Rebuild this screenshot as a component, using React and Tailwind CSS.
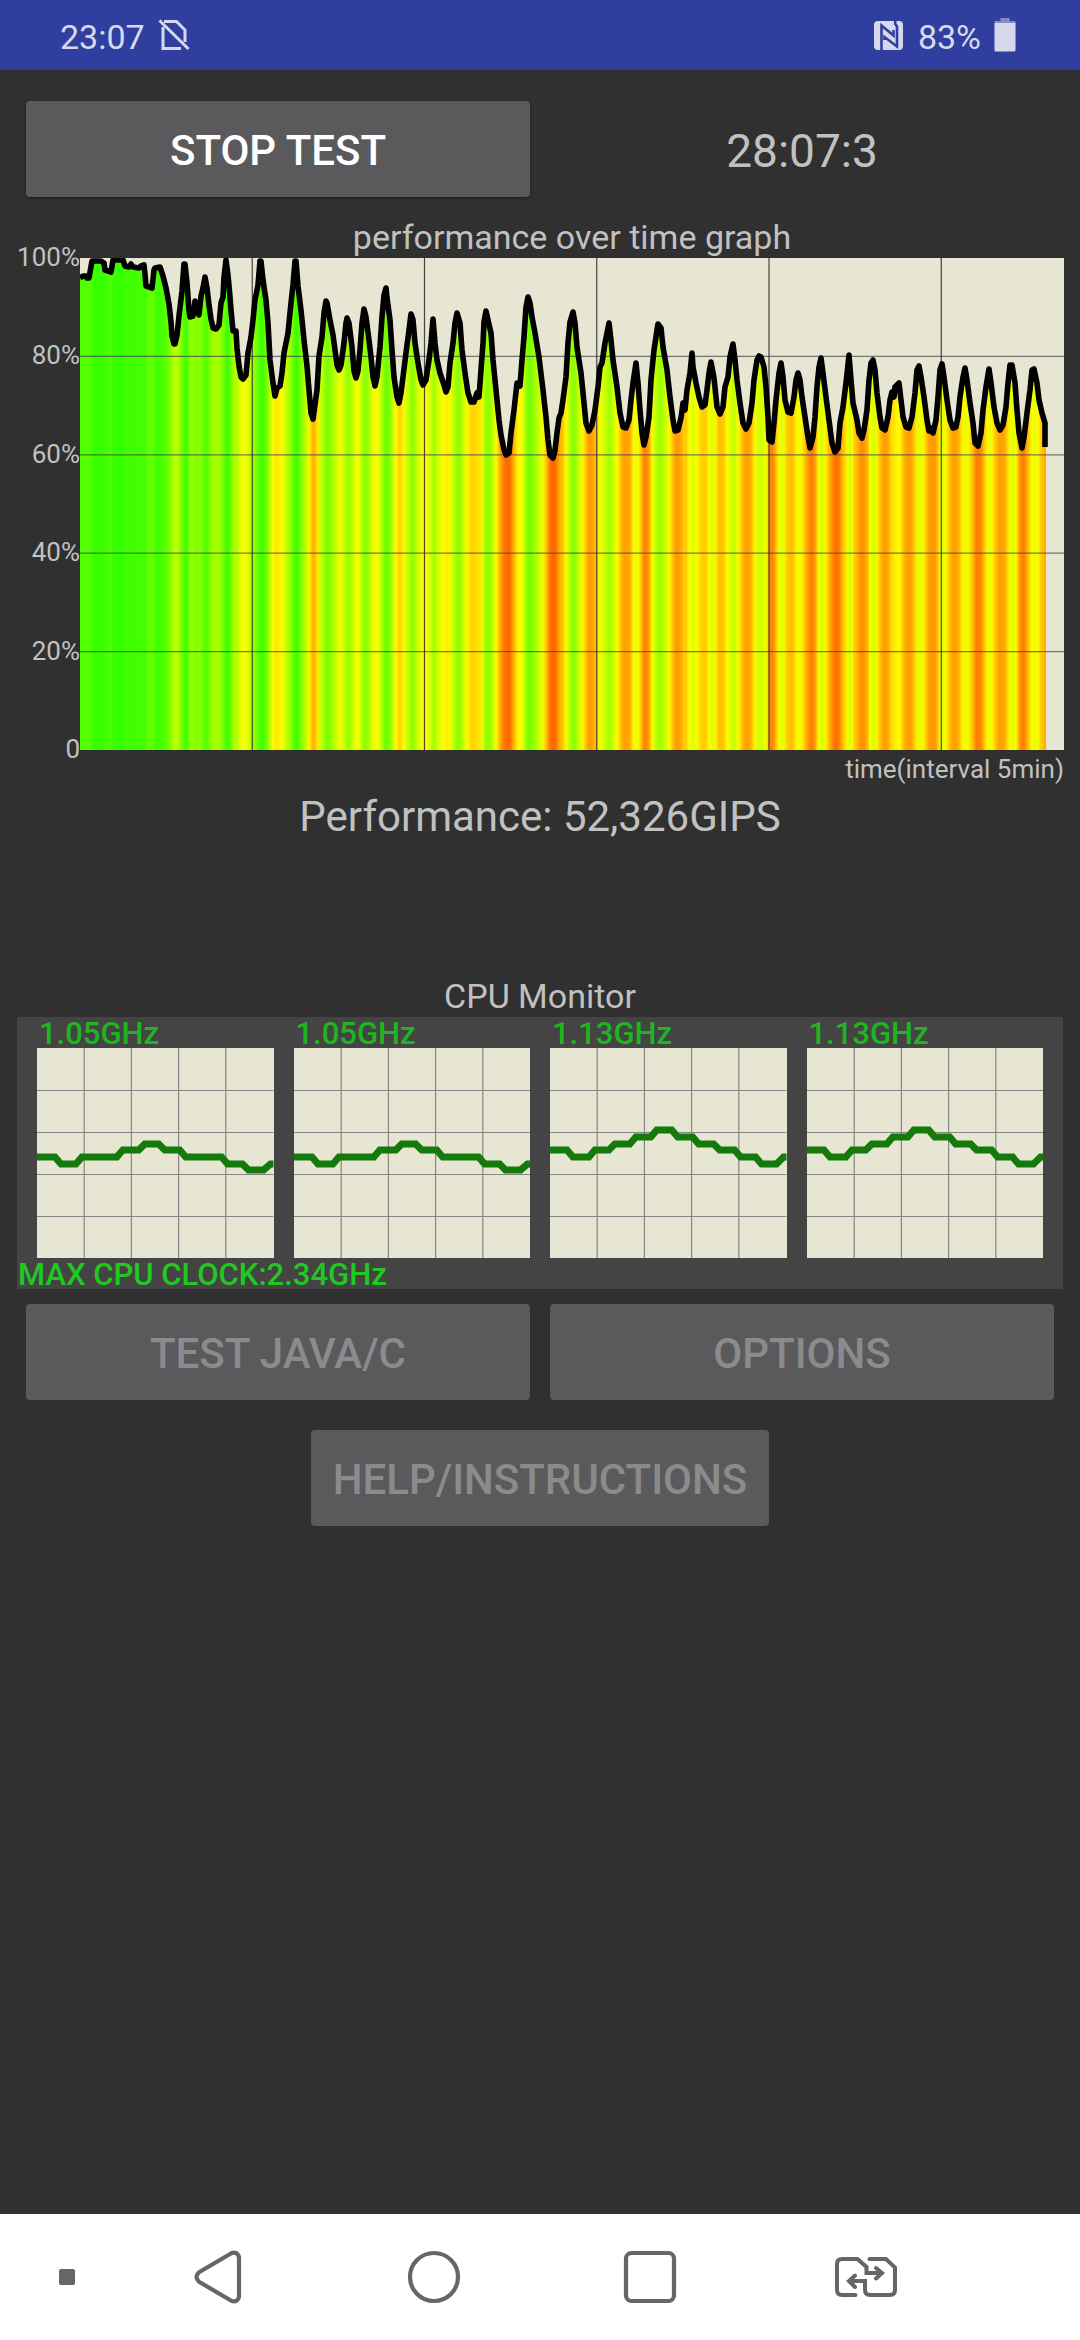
import React from 'react';

const CHART_W = 984;
const CHART_H = 492;

// performance trace, x/y in chart units (y = 0 is 100%)
const TRACE = `0,20 3,18 6,18 7,20 9,20 12,3 21,3 24,5 25,12 31,14 33,2 43,2 45,8 49,9 51,6 53,9 59,10 61,8 64,7
65,16 66,28 72,30 74,12 75,10 80,9 83,18 86,30 89,46 91,64 92,78 94,86 95,86 97,77 99,58 102,33 104,6 105,6
107,25 109,52 110,59 113,58 114,52 115,43 117,50 119,57 121,38 123,30 125,19 127,30 129,47 131,61 133,70
136,71 139,67 141,45 143,39 144,19 146,2 148,17 150,39 151,52 153,73 156,73 157,90 159,108 161,119 163,121
166,117 168,95 171,79 173,62 175,42 178,27 180,3 181,3 183,22 186,42 188,65 190,102 193,125 195,138 197,130
200,128 202,115 204,95 208,75 211,45 213,27 215,3 216,3 218,28 221,52 224,82 227,108 229,132 231,155 233,161
234,154 237,132 239,98 242,79 244,55 246,43 247,45 250,62 253,77 255,92 257,107 259,112 261,107 264,85
266,65 267,60 269,65 272,89 274,113 276,120 278,113 280,92 282,65 284,51 286,59 289,82 291,99 293,119
295,128 297,119 300,89 302,59 304,37 306,30 307,40 310,62 312,92 314,119 317,139 319,145 321,135 323,119
326,95 329,72 331,56 333,62 335,85 338,105 341,122 343,127 346,122 349,102 351,85 353,61 355,85 357,102
360,115 363,124 366,134 368,129 370,105 373,85 375,65 377,55 380,65 382,92 385,115 388,135 391,144 394,144
397,135 399,139 401,112 403,85 404,64 406,53 408,62 411,75 413,102 416,132 419,162 421,177 424,192 426,197
429,195 431,175 434,152 437,125 440,128 442,102 444,79 446,49 448,39 450,45 452,59 455,75 459,99 463,132
466,159 468,182 470,197 473,200 475,192 477,175 479,160 481,155 483,142 486,119 488,85 490,64 493,54 495,65
497,89 501,115 504,145 506,165 509,173 512,167 515,152 518,129 520,109 522,105 525,85 527,75 529,65 531,82
533,102 537,129 540,155 543,169 546,170 549,162 551,142 553,125 556,105 558,125 560,152 562,175 564,187
566,179 569,159 571,122 574,92 577,72 578,66 581,70 583,89 587,112 590,139 593,162 595,173 598,172 601,160
603,145 605,152 607,132 610,115 612,95 613,109 616,125 619,139 622,149 625,147 627,132 629,115 631,104
634,120 637,149 640,156 643,149 645,129 648,119 650,99 653,86 655,102 657,122 660,145 663,165 666,171
669,165 672,145 674,122 677,102 679,98 681,99 684,109 686,129 688,159 689,182 692,184 694,165 696,142
699,115 701,105 703,119 705,142 708,154 711,155 714,139 716,122 718,115 720,122 722,139 725,159 728,179
730,190 733,179 735,159 737,129 739,109 741,100 743,115 746,139 749,162 752,185 755,194 758,190 760,165
763,149 766,125 769,97 771,122 773,145 777,162 779,175 782,180 784,172 787,152 789,122 791,105 793,102
795,112 797,135 800,159 802,170 805,172 808,159 810,142 812,134 814,139 815,129 819,125 821,142 823,159
826,169 829,170 832,159 835,135 837,112 839,108 841,119 844,139 847,162 849,173 852,170 853,175 856,162
858,139 860,112 862,106 864,119 867,142 870,162 873,170 876,169 878,159 880,139 883,119 885,110 887,122
890,145 893,165 895,185 898,188 901,175 903,152 906,129 909,111 911,125 914,149 917,165 920,172 923,167
926,149 928,125 930,107 932,107 935,125 937,152 939,175 942,190 944,179 947,155 950,132 952,112 954,111
957,125 959,142 962,155 965,165 965,189`
  .split(/\s+/)
  .map((p) => p.split(',').map(Number));

const TRACE_END = 966;

const CORE_LOW = '0,109 18,109 24,116 39,116 45,109 80,109 86,102 102,102 108,96 122,96 128,102 143,102 149,109 185,109 191,116 206,116 212,122 227,122 234,116 237,116';
const CORE_HIGH = '0,102 17,102 23,109 39,109 45,102 59,102 65,96 80,96 86,89 101,89 107,82 122,82 128,89 143,89 149,96 164,96 170,102 185,102 191,109 206,109 212,116 227,116 234,109 237,109';

const CORES = [
  { clock: '1.05GHz', points: CORE_LOW },
  { clock: '1.05GHz', points: CORE_LOW },
  { clock: '1.13GHz', points: CORE_HIGH },
  { clock: '1.13GHz', points: CORE_HIGH },
];

function traceY(x) {
  const i = TRACE.findIndex((p) => p[0] >= x);
  if (i === 0) return TRACE[0][1];
  if (i < 0) return TRACE[TRACE.length - 1][1];
  const [x0, y0] = TRACE[i - 1];
  const [x1, y1] = TRACE[i];
  return y0 + ((y1 - y0) * (x - x0)) / (x1 - x0);
}

// green at 100%, yellow at 75%, orange and red below
function loadColor(y) {
  const pct = 100 - (y / CHART_H) * 100;
  if (pct >= 75) return `rgb(${Math.round(51 + (100 - pct) * 8)},255,0)`;
  return `rgb(255,${Math.max(0, Math.round(255 - (75 - pct) * 10))},0)`;
}

const STOPS = [];
for (let x = 0; x <= TRACE_END; x += 2) STOPS.push([x / TRACE_END, loadColor(traceY(x - 1))]);

const linePoints = TRACE.map((p) => p.join(',')).join(' ');

function PerformanceChart() {
  return (
    <svg viewBox={`0 0 ${CHART_W} ${CHART_H}`} preserveAspectRatio="none" className="block w-full h-full bg-[#e6e6d2]" role="img" aria-label="performance over time">
      <defs>
        <linearGradient id="load" gradientUnits="userSpaceOnUse" x1="0" y1="0" x2={TRACE_END} y2="0">
          {STOPS.map(([offset, color]) => <stop key={offset} offset={offset} stopColor={color} />)}
        </linearGradient>
      </defs>
      <polygon points={`0,${CHART_H} ${linePoints} ${TRACE_END},189 ${TRACE_END},${CHART_H}`} fill="url(#load)" />
      {[1, 2, 3, 4].map((i) => (
        <line key={i} x1="0" x2={CHART_W} y1={i * 98.4} y2={i * 98.4} stroke="#444" strokeOpacity="0.7" strokeWidth="1.2" />
      ))}
      {[1, 2, 3, 4, 5].map((i) => (
        <line key={i} x1={i * 172.25} x2={i * 172.25} y1="0" y2={CHART_H} stroke="#333" strokeOpacity="0.9" strokeWidth="1.2" />
      ))}
      <polyline points={linePoints} fill="none" stroke="#000" strokeWidth="5.6" strokeLinejoin="round" />
    </svg>
  );
}

function CoreGraph({ clock, points }) {
  return (
    <div className="flex-1 min-w-0">
      <p className="pt-[3px] pl-[2px] text-[31px] leading-7 font-medium text-[#1fb51f]">{clock}</p>
      <svg viewBox="0 0 237 210" preserveAspectRatio="none" className="block w-full h-[210px] bg-[#e6e6d2]">
        {[1, 2, 3, 4].map((i) => (
          <g key={i} stroke="#858585" strokeWidth="1.2">
            <line x1={i * 47.3} x2={i * 47.3} y1="0" y2="210" />
            <line x1="0" x2="237" y1={i * 42 + 0.5} y2={i * 42 + 0.5} />
          </g>
        ))}
        <polyline points={points} fill="none" stroke="#147a0c" strokeWidth="7" />
      </svg>
    </div>
  );
}

function AppButton({ className = '', children, ...props }) {
  return (
    <button
      className={`h-24 pt-[3px] rounded bg-[#5a5a5c] text-[42px] leading-none font-medium text-white shadow-[0_1px_3px_rgba(0,0,0,0.4)] disabled:text-[#8b8b8d] disabled:shadow-none ${className}`}
      {...props}
    >
      {children}
    </button>
  );
}

function StatusBar() {
  return (
    <header className="h-[70px] bg-[#303f9f] flex items-center justify-between pl-[60px] pr-[64px] text-[34px] leading-none text-[#d6d9ec]">
      <div className="flex items-center gap-[13px]">
        <span className="pt-[3px]">23:07</span>
        <svg width="32" height="32" viewBox="0 0 32 32" fill="none" stroke="currentColor" strokeWidth="3">
          <path d="M6 2.5H18.5L27 11V23" />
          <path d="M5 8V29.5H23" />
          <path d="M1.5 1.5L30.5 30" />
        </svg>
      </div>
      <div className="flex items-center">
        <svg width="29" height="29" viewBox="0 0 29 29">
          <rect width="29" height="29" rx="4" fill="currentColor" />
          <path d="M7.5 29V4.5L19.5 14.5V9" fill="none" stroke="#303f9f" strokeWidth="2.6" />
          <path d="M21.2 0V4M10.5 19V16L23 25.5V5.5L21.2 3" fill="none" stroke="#303f9f" strokeWidth="2.6" />
        </svg>
        <span className="ml-[15px] pt-[3px]">83%</span>
        <svg className="ml-[13px]" width="22" height="34" viewBox="0 0 22 34" fill="currentColor">
          <path d="M6.5 0H15.5V3H21.5V5H0.5V3H6.5Z" opacity="0.5" />
          <path d="M0.5 5H21.5V32Q21.5 33.5 20 33.5H2Q0.5 33.5 0.5 32Z" />
        </svg>
      </div>
    </header>
  );
}

function NavBar() {
  const cell = 'flex-1 h-full flex items-center justify-center';
  return (
    <nav className="h-[126px] bg-white flex items-center text-[#666]">
      <button aria-label="Hide navigation bar" className="w-[110px] h-full flex items-center pl-[59px]">
        <span className="w-4 h-4 rounded-xs bg-[#666]" />
      </button>
      <button aria-label="Back" className={cell}>
        <svg width="48" height="54" viewBox="0 0 48 54" fill="none" stroke="currentColor" strokeWidth="4.2" strokeLinejoin="round">
          <path d="M36.5 3.7L5 22.2Q0 27 5 31.8L36.5 50.3Q43 53.5 45 47V7Q43 0.5 36.5 3.7Z" />
        </svg>
      </button>
      <button aria-label="Home" className={cell}>
        <svg width="54" height="54" viewBox="0 0 54 54" fill="none" stroke="currentColor" strokeWidth="4.2">
          <circle cx="27" cy="27" r="24" />
        </svg>
      </button>
      <button aria-label="Recent apps" className={cell}>
        <svg width="54" height="54" viewBox="0 0 54 54" fill="none" stroke="currentColor" strokeWidth="4.2">
          <rect x="3" y="3" width="48" height="48" rx="5.5" />
        </svg>
      </button>
      <button aria-label="Switch SIM" className={cell}>
        <svg width="64" height="42" viewBox="0 0 64 42" fill="none" stroke="currentColor" strokeWidth="4" strokeLinecap="round">
          <path d="M21.5 39H8Q3 39 3 34V8Q3 3 8 3H23.5L32.5 11V17H46M42 12L48 17L42 22.5" />
          <path d="M35.5 3H52L61 11.5V34Q61 39 56 39H36Q31 39 31 34V25H17M21 19.5L15 25L21 31" />
        </svg>
      </button>
      <div className="w-[106px]" />
    </nav>
  );
}

export default function App() {
  return (
    <div className="min-h-screen flex flex-col bg-[#303030] text-[#c1c1c1] font-['Roboto',sans-serif]">
      <StatusBar />
      <main className="flex-1 pt-[31px]">
        <div className="grid grid-cols-2 gap-5 items-center px-[26px]">
          <AppButton>STOP TEST</AppButton>
          <p className="pt-[3px] text-center text-[46px] leading-none">28:07:3</p>
        </div>

        <section className="pr-4">
          <h2 className="mt-[19px] ml-20 text-center text-[34px] leading-[42px]">performance over time graph</h2>
          <div className="flex">
            <div className="w-20 -mt-[14px] -mb-[12px] flex flex-col justify-between text-right text-[26px] leading-[26px]">
              {['100%', '80%', '60%', '40%', '20%', '0'].map((label) => <span key={label}>{label}</span>)}
            </div>
            <div className="flex-1 min-w-0 h-[492px]">
              <PerformanceChart />
            </div>
          </div>
          <p className="mt-[5px] text-right text-[26px] leading-7">time(interval 5min)</p>
        </section>
        <p className="mt-[9px] text-center text-[42px] leading-[50px]">Performance: 52,326GIPS</p>

        <h2 className="mt-[133px] text-center text-[34px] leading-[42px]">CPU Monitor</h2>
        <section className="mx-[17px] bg-[#444]">
          <div className="flex gap-5 px-5">
            {CORES.map((core, i) => <CoreGraph key={i} {...core} />)}
          </div>
          <p className="pt-[3px] pl-px text-[31px] leading-7 font-medium text-[#1fc91f]">MAX CPU CLOCK:2.34GHz</p>
        </section>

        <div className="mt-[15px] grid grid-cols-2 gap-5 px-[26px]">
          <AppButton disabled>TEST JAVA/C</AppButton>
          <AppButton disabled>OPTIONS</AppButton>
        </div>
        <div className="mt-[30px] flex justify-center">
          <AppButton disabled className="px-[22px]">HELP/INSTRUCTIONS</AppButton>
        </div>
      </main>
      <NavBar />
    </div>
  );
}
